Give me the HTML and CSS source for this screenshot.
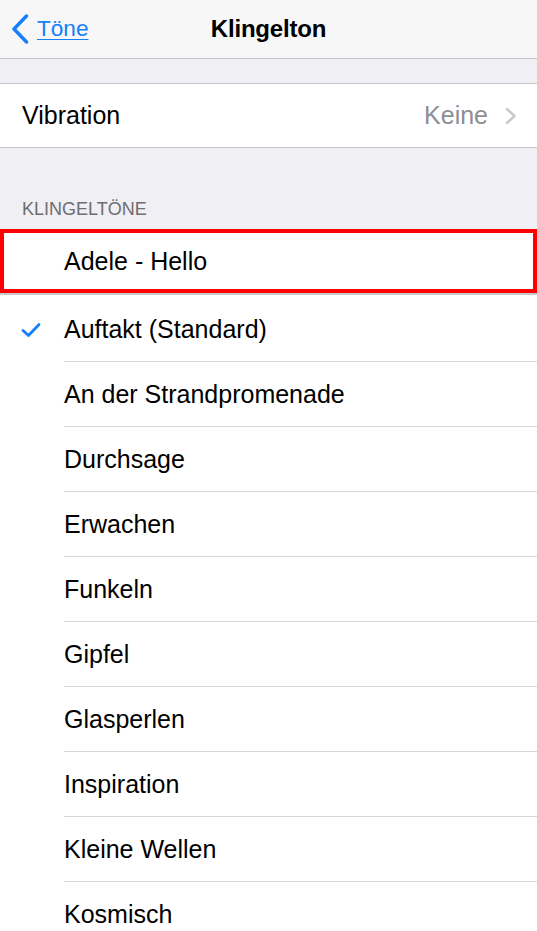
FILE: index.html
```html
<!DOCTYPE html>
<html lang="de">
<head>
<meta charset="utf-8">
<title>Klingelton</title>
<link rel="stylesheet" href="styles.css">
</head>
<body>
<header class="navbar">
  <a class="back" href="#">
    <svg class="back-chevron" width="18" height="30" viewBox="0 0 18 30"><path d="M15.5 2 L3 15 L15.5 28" fill="none" stroke="#157efb" stroke-width="3.4" stroke-linecap="round" stroke-linejoin="round"/></svg>
    <span class="back-label">Töne</span>
  </a>
  <h1 class="title">Klingelton</h1>
  <div class="nav-right"></div>
</header>

<div class="spacer"></div>

<section class="group">
  <div class="setting-row">
    <span class="setting-label">Vibration</span>
    <span class="setting-value">Keine</span>
    <svg class="disclosure" width="12" height="18" viewBox="0 0 12 18"><path d="M2 2 L9.5 9 L2 16" fill="none" stroke="#c7c7cc" stroke-width="2.4" stroke-linecap="round" stroke-linejoin="round"/></svg>
  </div>
</section>

<div class="section-header">KLINGELTÖNE</div>

<div class="item item--highlight">
  <span class="check"></span>
  <span class="label">Adele - Hello</span>
  <div class="highlight-box"></div>
</div>

<div class="tones">
  <div class="item">
    <span class="check"><svg width="20" height="16" viewBox="0 0 20 16"><path d="M2 8.5 L7.5 13.5 L18 2.5" fill="none" stroke="#157efb" stroke-width="2.8" stroke-linecap="round" stroke-linejoin="round"/></svg></span>
    <span class="label">Auftakt (Standard)</span>
  </div>
  <div class="item"><span class="check"></span><span class="label">An der Strandpromenade</span></div>
  <div class="item"><span class="check"></span><span class="label">Durchsage</span></div>
  <div class="item"><span class="check"></span><span class="label">Erwachen</span></div>
  <div class="item"><span class="check"></span><span class="label">Funkeln</span></div>
  <div class="item"><span class="check"></span><span class="label">Gipfel</span></div>
  <div class="item"><span class="check"></span><span class="label">Glasperlen</span></div>
  <div class="item"><span class="check"></span><span class="label">Inspiration</span></div>
  <div class="item"><span class="check"></span><span class="label">Kleine Wellen</span></div>
  <div class="item"><span class="check"></span><span class="label">Kosmisch</span></div>
</div>
</body>
</html>
```

FILE: styles.css
```css
* { box-sizing: border-box; }
html, body {
  margin: 0;
  padding: 0;
  background: #ffffff;
  font-family: "Liberation Sans", Arial, sans-serif;
  color: #000;
  overflow: hidden;
}
.navbar {
  height: 59px;
  background: #f7f7f7;
  border-bottom: 1px solid #c4c4c7;
  display: grid;
  grid-template-columns: 1fr auto 1fr;
  align-items: center;
}
.back {
  display: flex;
  align-items: center;
  gap: 8px;
  padding-left: 11px;
  color: #157efb;
  text-decoration: none;
  justify-self: start;
}
.back-chevron { display: block; }
.back-label {
  font-size: 22.6px;
  text-decoration: underline;
  text-underline-offset: 3px;
  text-decoration-thickness: 1px;
}
.title {
  margin: 0;
  font-size: 24px;
  font-weight: 700;
  letter-spacing: -0.2px;
}
.spacer {
  height: 24px;
  background: #efeff4;
}
.group {
  border-top: 1px solid #c8c7cc;
  border-bottom: 1px solid #c8c7cc;
  background: #fff;
}
.setting-row {
  height: 63px;
  display: flex;
  align-items: center;
  padding: 0 20px 0 22px;
  font-size: 25px;
}
.setting-label { flex: 1; }
.setting-value {
  color: #8e8e93;
  margin-right: 17px;
}
.disclosure { display: block; }
.section-header {
  height: 81px;
  background: #efeff4;
  display: flex;
  align-items: flex-end;
  padding: 0 0 9px 22px;
  font-size: 18px;
  line-height: 22px;
  color: #6d6d72;
}
.item {
  display: flex;
  height: 65px;
  background: #fff;
}
.check {
  width: 64px;
  flex: none;
  display: flex;
  align-items: center;
  padding-left: 21px;
}
.check svg { display: block; }
.label {
  flex: 1;
  display: flex;
  align-items: center;
  padding-top: 1px;
  font-size: 25px;
  border-bottom: 1px solid #d9d9dc;
}
.item--highlight {
  position: relative;
  height: 66px;
  border-bottom: 2px solid #c8c7cc;
}
.item--highlight .label { border-bottom: none; }
.highlight-box {
  position: absolute;
  left: 0;
  right: 0;
  top: 0;
  height: 64px;
  border: 4px solid #ff0000;
  pointer-events: none;
}
.tones {
  padding-top: 2px;
}
```
